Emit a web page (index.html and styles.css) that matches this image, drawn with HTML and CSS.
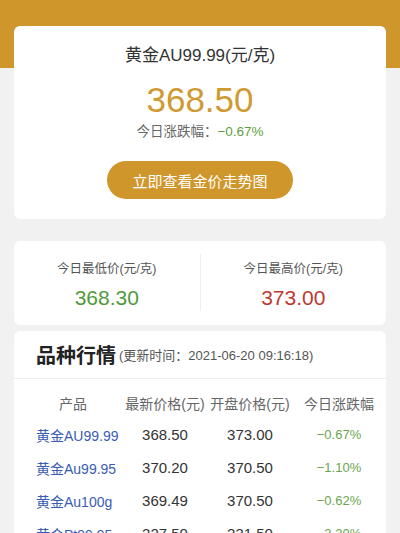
FILE: index.html
```html
<!DOCTYPE html>
<html lang="zh-CN">
<head>
    <meta charset="UTF-8">
    <meta name="viewport" content="width=device-width, initial-scale=1.0">
    <title>黄金价格</title>
    <link rel="stylesheet" href="styles.css">
</head>
<body>
    <div class="page">
        <div class="card main-card">
            <div class="main-title">黄金AU99.99(元/克)</div>
            <div class="main-price">368.50</div>
            <div class="main-change">今日涨跌幅：<span class="down">−0.67%</span></div>
            <button class="trend-btn">立即查看金价走势图</button>
        </div>

        <div class="card range-card">
            <div class="range-col">
                <div class="range-label">今日最低价(元/克)</div>
                <div class="range-value low">368.30</div>
            </div>
            <div class="range-col">
                <div class="range-label">今日最高价(元/克)</div>
                <div class="range-value high">373.00</div>
            </div>
        </div>

        <div class="card market-card">
            <div class="market-head">
                <span class="market-title">品种行情</span>
                <span class="market-time">(更新时间：2021-06-20 09:16:18)</span>
            </div>
            <div class="market-table">
                <div class="row head-row">
                    <span class="cell name">产品</span>
                    <span class="cell">最新价格(元)</span>
                    <span class="cell">开盘价格(元)</span>
                    <span class="cell">今日涨跌幅</span>
                </div>
                <div class="row">
                    <span class="cell name">黄金AU99.99</span>
                    <span class="cell">368.50</span>
                    <span class="cell">373.00</span>
                    <span class="cell pct">−0.67%</span>
                </div>
                <div class="row">
                    <span class="cell name">黄金Au99.95</span>
                    <span class="cell">370.20</span>
                    <span class="cell">370.50</span>
                    <span class="cell pct">−1.10%</span>
                </div>
                <div class="row">
                    <span class="cell name">黄金Au100g</span>
                    <span class="cell">369.49</span>
                    <span class="cell">370.50</span>
                    <span class="cell pct">−0.62%</span>
                </div>
                <div class="row">
                    <span class="cell name">黄金Pt99.95</span>
                    <span class="cell">227.50</span>
                    <span class="cell">231.50</span>
                    <span class="cell pct">−2.20%</span>
                </div>
            </div>
        </div>
    </div>
</body>
</html>
```

FILE: styles.css
```css
body {
    margin: 0;
    font-family: "Liberation Sans", "Noto Sans CJK SC", sans-serif;
    color: #333;
    background-color: #f1f1f1;
}

.page {
    padding: 26px 14px 20px;
    background: linear-gradient(#cf962b 0, #cf962b 68px, #f1f1f1 68px);
}

.card {
    background-color: #fff;
    border-radius: 6px;
}

/* Main price card */
.main-card {
    padding: 20px 0 20px;
    display: flex;
    flex-direction: column;
    align-items: center;
}

.main-title {
    font-size: 17px;
    line-height: 20px;
    color: #333;
}

.main-price {
    margin-top: 14px;
    font-size: 35px;
    line-height: 40px;
    color: #d09a33;
}

.main-change {
    margin-top: 2px;
    font-size: 13.5px;
    line-height: 20px;
    color: #666;
}

.down {
    color: #5e9f42;
}

.trend-btn {
    margin-top: 19px;
    width: 186px;
    height: 38px;
    border: none;
    border-radius: 19px;
    background-color: #cf962b;
    color: #fff;
    font-family: inherit;
    font-size: 15px;
    cursor: pointer;
}

/* Low / high card */
.range-card {
    margin-top: 22px;
    padding: 13px 0 14px;
    display: flex;
}

.range-col {
    flex: 1;
    height: 57px;
    display: flex;
    flex-direction: column;
    align-items: center;
}

.range-col + .range-col {
    border-left: 1px solid #eee;
}

.range-label {
    margin-top: 6px;
    font-size: 12.5px;
    line-height: 18px;
    color: #555;
}

.range-value {
    margin-top: 8px;
    font-size: 21px;
    line-height: 24px;
}

.low {
    color: #4f9a3c;
}

.high {
    color: #bd3a30;
}

/* Market table */
.market-card {
    margin-top: 6px;
    padding-bottom: 10px;
}

.market-head {
    height: 47px;
    padding-left: 22px;
    display: flex;
    align-items: center;
    border-bottom: 1px solid #eee;
}

.market-title {
    font-size: 20px;
    font-weight: bold;
    color: #222;
}

.market-time {
    margin-left: 3px;
    font-size: 13px;
    color: #555;
}

.market-table {
    padding: 9px 0 0 22px;
}

.row {
    display: grid;
    grid-template-columns: 86px 86px 84px 94px;
    height: 33px;
    align-items: center;
    font-size: 15px;
    color: #333;
}

.head-row {
    height: 30px;
    font-size: 14px;
    color: #666;
}

.cell {
    text-align: center;
    white-space: nowrap;
}

.name {
    text-align: left;
    font-size: 14px;
    color: #3b5cb3;
}

.head-row .name {
    text-align: center;
    padding-right: 12px;
    color: #666;
}

.pct {
    font-size: 13px;
    color: #6aa64e;
}
```
